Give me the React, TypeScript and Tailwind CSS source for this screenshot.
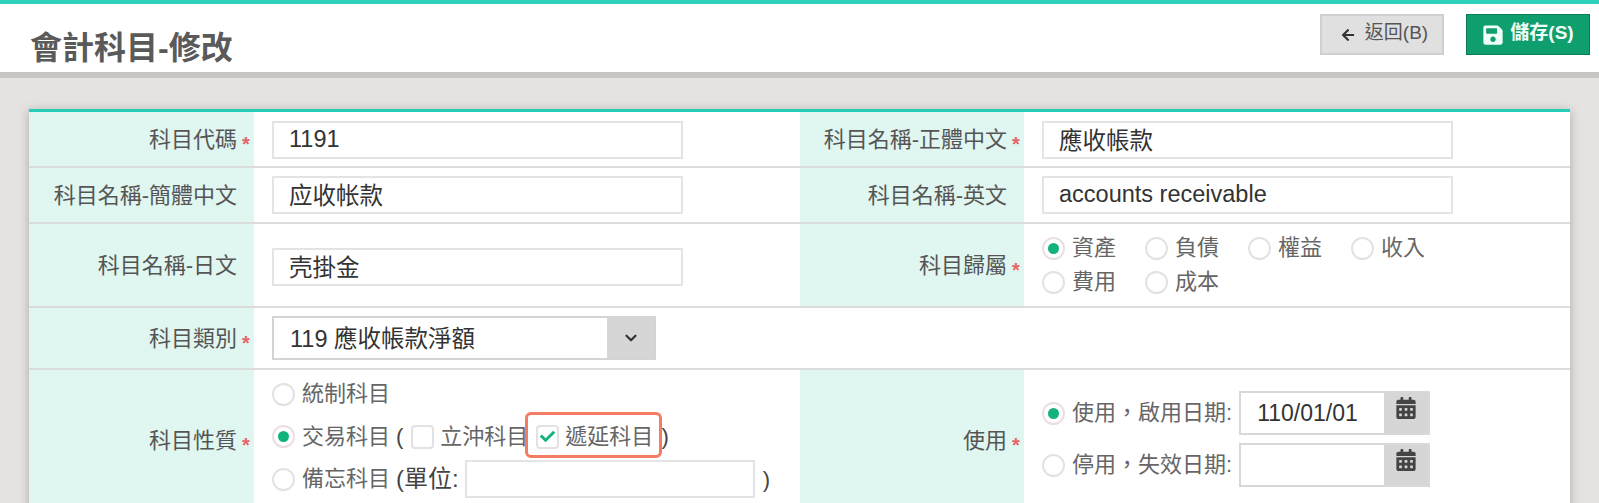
import React from 'react';
import { FaArrowLeft, FaCalendarAlt, FaCheck, FaSave } from 'react-icons/fa';
import { ChevronDown } from 'lucide-react';

const Req = () => <span className="mt-[9px] ml-[5px] inline-block w-[10px] text-[20px] leading-none font-bold text-[#e5646a]">*</span>;

const Label: React.FC<{ text: string; req?: boolean }> = ({ text, req }) => (
    <div className="flex items-center justify-end bg-[#e0f6f0] pr-[2px] text-[22px] text-[#555]">
        <span>{text}</span>
        {req ? <Req /> : <span className="ml-[5px] w-[10px]" />}
    </div>
);

const Radio: React.FC<{ label?: string; checked?: boolean }> = ({ label, checked }) => (
    <span className="inline-flex items-center text-[22px] leading-[30px] text-[#666]">
        <span className={`flex h-[23px] w-[23px] shrink-0 items-center justify-center rounded-full border-2 bg-white ${checked ? 'border-[#eadfe0]' : 'border-[#e2e2e2]'}`}>
            {checked && <span className="h-[11px] w-[11px] rounded-full bg-[#12b27c]" />}
        </span>
        {label && <span className="ml-[7px] whitespace-nowrap">{label}</span>}
    </span>
);

const Check: React.FC<{ label: string; checked?: boolean }> = ({ label, checked }) => (
    <span className="inline-flex items-center text-[22px] text-[#666]">
        <span className="flex h-[24px] w-[23px] shrink-0 items-center justify-center rounded-[4px] border-2 border-[#e2e2e2] bg-white">
            {checked && <FaCheck className="text-[15px] text-[#12b27c]" />}
        </span>
        <span className="ml-[6px] whitespace-nowrap">{label}</span>
    </span>
);

const TextInput: React.FC<{ value?: string }> = ({ value }) => (
    <input
        readOnly
        value={value ?? ''}
        className="h-[38px] w-[411px] border-2 border-[#e4e4e4] bg-white px-[15px] pb-[2px] text-[23.5px] text-[#333] outline-none"
    />
);

const DateInput: React.FC<{ value?: string }> = ({ value }) => (
    <div className="flex h-[44px] w-[191px] border-2 border-[#d8d8d8]">
        <input readOnly value={value ?? ''} className="w-[143px] bg-white px-[16px] text-[23px] text-[#333] outline-none" />
        <span className="flex flex-1 justify-center bg-[#d6d6d6] pt-[4px]">
            <FaCalendarAlt className="text-[22px] text-[#444]" />
        </span>
    </div>
);

export default function App() {
    return (
        <div className="h-[503px] w-[1599px] overflow-hidden bg-[#e4e3e1] font-['Liberation_Sans','Noto_Sans_CJK_TC',sans-serif]">
            <header className="relative flex h-[78px] border-t-[4px] border-b-[6px] border-t-[#2ed3bd] border-b-[#c6c5c3] bg-white">
                <h1 className="pt-[21px] pl-[30px] text-[32px] leading-[46px] font-bold text-[#5a5a5a]">會計科目-修改</h1>
                <div className="ml-auto flex items-start gap-[22px] pt-[10px] pr-[9px]">
                    <button className="flex h-[41px] w-[124px] items-center justify-center gap-[10px] border-2 border-[#cfcfcf] bg-[#e0e0e0] pb-[2px] pl-[5px] text-[19px] text-[#555]">
                        <FaArrowLeft className="mt-[3px] text-[14px] text-[#333]" />
                        返回(B)
                    </button>
                    <button className="flex h-[41px] w-[124px] items-center justify-center gap-[6px] border border-[#0a7d58] bg-[#0f9e6e] pb-[2px] text-[19px] font-bold text-[#f0fff8]">
                        <FaSave className="mt-[3px] text-[22px]" />
                        儲存(S)
                    </button>
                </div>
            </header>

            <main className="mx-[29px] mt-[31px] border-t-[3px] border-t-[#25cdb8] bg-white shadow-[0_2px_10px_rgba(0,0,0,0.25)]">
                <div className="grid h-[56px] grid-cols-[225px_546px_224px_1fr] border-b-2 border-[#dcdcdc]">
                    <Label text="科目代碼" req />
                    <div className="flex items-center pt-[2px] pl-[18px]"><TextInput value="1191" /></div>
                    <Label text="科目名稱-正體中文" req />
                    <div className="flex items-center pt-[2px] pl-[18px]"><TextInput value="應收帳款" /></div>
                </div>
                <div className="grid h-[56px] grid-cols-[225px_546px_224px_1fr] border-b-2 border-[#dcdcdc]">
                    <Label text="科目名稱-簡體中文" />
                    <div className="flex items-center pl-[18px]"><TextInput value="应收帐款" /></div>
                    <Label text="科目名稱-英文" />
                    <div className="flex items-center pl-[18px]"><TextInput value="accounts receivable" /></div>
                </div>
                <div className="grid h-[84px] grid-cols-[225px_546px_224px_1fr] border-b-2 border-[#dcdcdc]">
                    <Label text="科目名稱-日文" />
                    <div className="flex items-center pt-[4px] pl-[18px]"><TextInput value="壳掛金" /></div>
                    <Label text="科目歸屬" req />
                    <div className="grid w-[430px] grid-cols-4 content-center gap-y-[4px] pl-[18px]">
                        <Radio label="資產" checked />
                        <Radio label="負債" />
                        <Radio label="權益" />
                        <Radio label="收入" />
                        <Radio label="費用" />
                        <Radio label="成本" />
                    </div>
                </div>
                <div className="grid h-[62px] grid-cols-[225px_1fr] border-b-2 border-[#dcdcdc]">
                    <Label text="科目類別" req />
                    <div className="flex items-center pl-[18px]">
                        <div className="flex h-[44px] w-[384px] border-2 border-[#d4d4d4]">
                            <span className="flex-1 bg-white pl-[16px] text-[23.5px] leading-[42px] text-[#333]">119 應收帳款淨額</span>
                            <span className="flex w-[47px] items-center justify-center bg-[#d6d6d6]">
                                <ChevronDown className="h-[18px] w-[18px] text-[#333]" strokeWidth={3} />
                            </span>
                        </div>
                    </div>
                </div>
                <div className="grid h-[140px] grid-cols-[225px_546px_224px_1fr]">
                    <Label text="科目性質" req />
                    <div className="flex flex-col items-start gap-[11px] pt-[9px] pl-[18px]">
                        <Radio label="統制科目" />
                        <div className="relative flex items-center">
                            <Radio label="交易科目" checked />
                            <span className="mr-[8px] ml-[6px] text-[22px] text-[#444]">(</span>
                            <Check label="立沖科目" />
                            <span className="ml-[8px]"><Check label="遞延科目" checked /></span>
                            <span className="ml-[8px] text-[22px] text-[#444]">)</span>
                            <span className="absolute top-[-8px] left-[253px] h-[46px] w-[137px] rounded-[6px] border-[3px] border-[#f47c64]" />
                        </div>
                        <div className="-mt-[4px] flex items-center">
                            <Radio label="備忘科目" />
                            <span className="ml-[6px] text-[24px] text-[#444]">(單位:</span>
                            <input readOnly className="ml-[6px] h-[38px] w-[290px] border-2 border-[#e4e4e4] bg-white outline-none" />
                            <span className="ml-[8px] text-[22px] text-[#444]">)</span>
                        </div>
                    </div>
                    <Label text="使用" req />
                    <div className="flex flex-col items-start gap-[8px] pt-[21px] pl-[18px]">
                        <div className="flex items-center">
                            <Radio label="使用，啟用日期:" checked />
                            <span className="ml-[7px]"><DateInput value="110/01/01" /></span>
                        </div>
                        <div className="flex items-center">
                            <Radio label="停用，失效日期:" />
                            <span className="ml-[7px]"><DateInput /></span>
                        </div>
                    </div>
                </div>
            </main>
        </div>
    );
}
